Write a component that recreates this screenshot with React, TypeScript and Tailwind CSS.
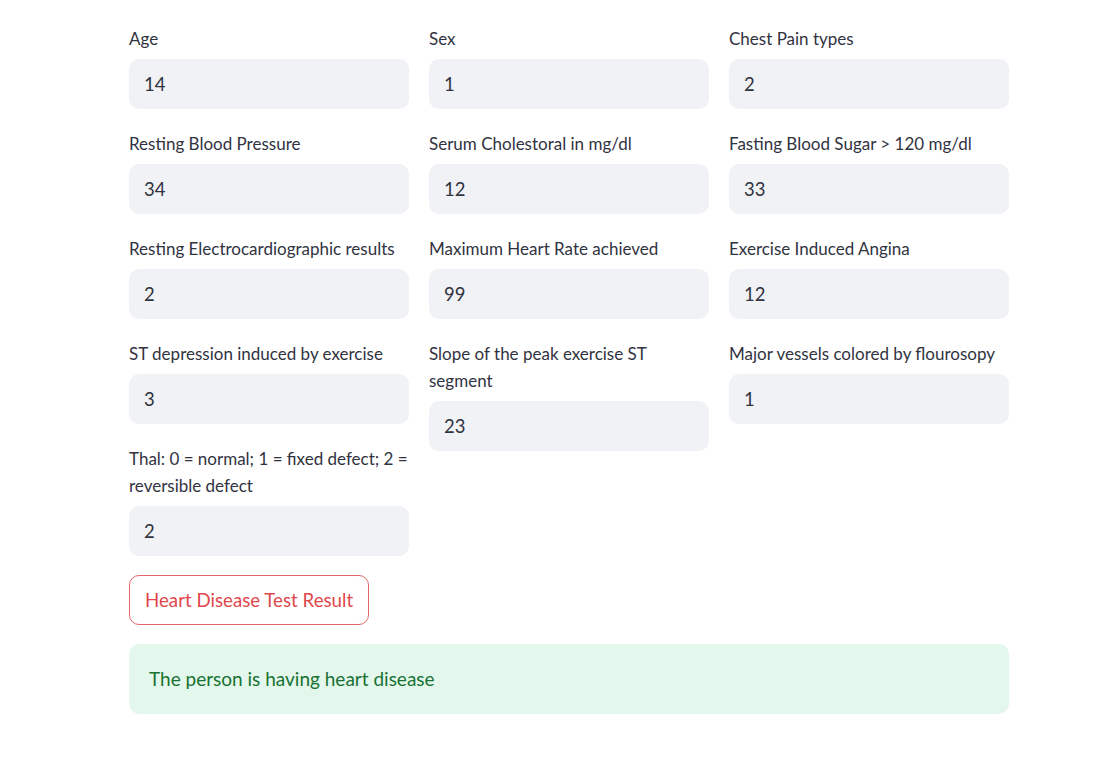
import React from 'react';

const fields: { label: string; value: string }[][] = [
  [
    { label: 'Age', value: '14' },
    { label: 'Resting Blood Pressure', value: '34' },
    { label: 'Resting Electrocardiographic results', value: '2' },
    { label: 'ST depression induced by exercise', value: '3' },
    { label: 'Thal: 0 = normal; 1 = fixed defect; 2 = reversible defect', value: '2' },
  ],
  [
    { label: 'Sex', value: '1' },
    { label: 'Serum Cholestoral in mg/dl', value: '12' },
    { label: 'Maximum Heart Rate achieved', value: '99' },
    { label: 'Slope of the peak exercise ST segment', value: '23' },
  ],
  [
    { label: 'Chest Pain types', value: '2' },
    { label: 'Fasting Blood Sugar > 120 mg/dl', value: '33' },
    { label: 'Exercise Induced Angina', value: '12' },
    { label: 'Major vessels colored by flourosopy', value: '1' },
  ],
];

const Field = ({ label, value }: { label: string; value: string }) => (
  <div className="flex flex-col">
    <label className="mb-[7px] text-[17px] leading-[27px] text-[#31333f]">{label}</label>
    <input
      defaultValue={value}
      className="h-[50px] w-full rounded-[10px] bg-[#f0f2f6] px-[15px] text-[18.5px] text-[#31333f] outline-none"
    />
  </div>
);

export default function App() {
  return (
    <div
      className="min-h-[768px] bg-white pt-[25px]"
      style={{ fontFamily: 'Lato, "Noto Sans", sans-serif' }}
    >
      <div className="ml-[129px] flex w-[880px] flex-col gap-[19px]">
        <div className="grid grid-cols-3 items-start gap-x-[20px]">
          {fields.map((col, i) => (
            <div key={i} className="flex flex-col gap-[21px]">
              {col.map((f) => (
                <Field key={f.label} {...f} />
              ))}
            </div>
          ))}
        </div>
        <div>
          <button
            type="button"
            className="h-[50px] rounded-[10px] border border-[#e5666a] bg-white px-[15px] text-[18.7px] text-[#e0474c]"
          >
            Heart Disease Test Result
          </button>
        </div>
        <div className="flex h-[70px] items-center rounded-[10px] bg-[#e4f7ec] px-[20px] text-[19px] text-[#177233]">
          The person is having heart disease
        </div>
      </div>
    </div>
  );
}
